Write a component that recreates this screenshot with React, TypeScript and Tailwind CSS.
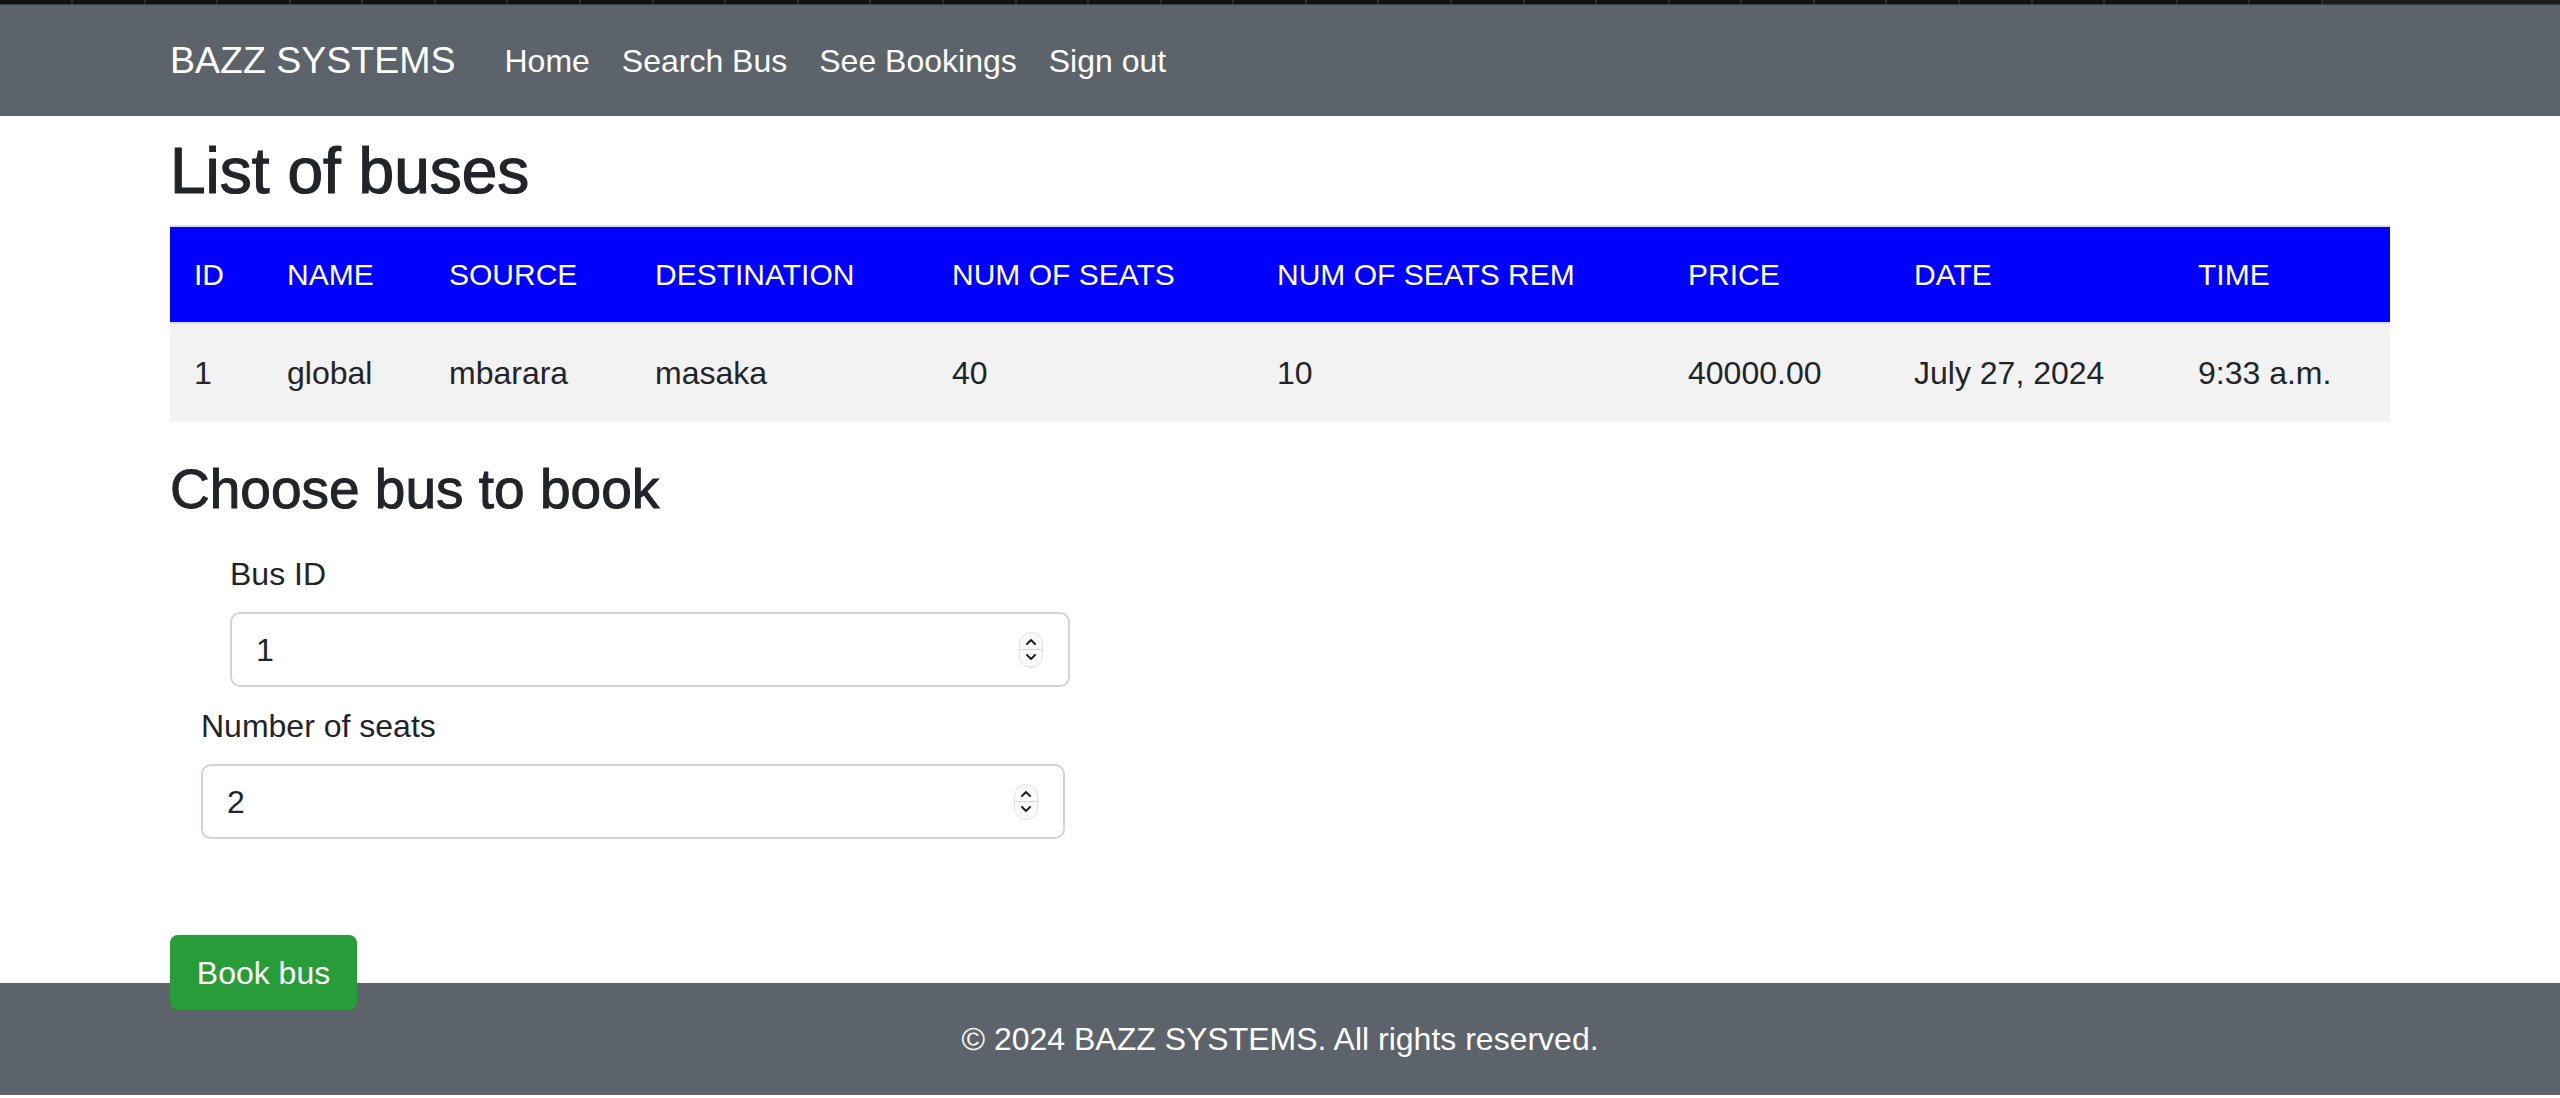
import React from 'react';

const cols = [
  { key: 'id', label: 'ID', w: 'w-[93px]' },
  { key: 'name', label: 'NAME', w: 'w-[162px]' },
  { key: 'source', label: 'SOURCE', w: 'w-[206px]' },
  { key: 'dest', label: 'DESTINATION', w: 'w-[297px]' },
  { key: 'seats', label: 'NUM OF SEATS', w: 'w-[325px]' },
  { key: 'rem', label: 'NUM OF SEATS REM', w: 'w-[411px]' },
  { key: 'price', label: 'PRICE', w: 'w-[226px]' },
  { key: 'date', label: 'DATE', w: 'w-[284px]' },
  { key: 'time', label: 'TIME', w: 'w-[216px]' },
];

const buses = [
  {
    id: '1',
    name: 'global',
    source: 'mbarara',
    dest: 'masaka',
    seats: '40',
    rem: '10',
    price: '40000.00',
    date: 'July 27, 2024',
    time: '9:33 a.m.',
  },
];

const Spinner = () => (
  <div className="flex h-[36px] w-[24px] flex-col items-center justify-center rounded-full border border-[#e3e3e3] bg-[#fbfbfb]">
    <svg width="12" height="10" viewBox="0 0 12 10" className="mb-[2px]">
      <path d="M2 7 L6 3 L10 7" fill="none" stroke="#222" strokeWidth="2" strokeLinecap="round" strokeLinejoin="round" />
    </svg>
    <div className="h-px w-full bg-[#d8d8d8]" />
    <svg width="12" height="10" viewBox="0 0 12 10" className="mt-[2px]">
      <path d="M2 3 L6 7 L10 3" fill="none" stroke="#222" strokeWidth="2" strokeLinecap="round" strokeLinejoin="round" />
    </svg>
  </div>
);

const NumberField = ({ value, width }: { value: string; width: string }) => (
  <div className={`flex h-[75px] ${width} items-center justify-between rounded-[10px] border-2 border-[#ced4da] bg-white pl-[24px] pr-[25px] text-[32px] text-[#212529]`}>
    <span>{value}</span>
    <Spinner />
  </div>
);

export default function App() {
  return (
    <div className="bg-white font-['Liberation_Sans',Arial,sans-serif] text-[#212529]">
      {/* top strip */}
      <div className="flex h-[4px] bg-[#1c1c1c]">
        <div className="h-full w-[71px] bg-[#111]" />
        {Array.from({ length: 31 }).map((_, i) => (
          <div key={i} className="h-full w-[72.58px] border-l-2 border-[#2c2c2c] bg-[#111]" />
        ))}
        <div className="h-full w-[2px] bg-[#2c2c2c]" />
      </div>
      <div className="h-px bg-[#3a3f45]" />

      <nav className="flex h-[111px] items-center bg-[#5c636a] text-white">
        <div className="mx-auto flex w-[2220px] items-center">
          <span className="mr-[33px] text-[37.5px]">BAZZ SYSTEMS</span>
          <a className="px-[16px] text-[32px]">Home</a>
          <a className="px-[16px] text-[32px]">Search Bus</a>
          <a className="px-[16px] text-[32px]">See Bookings</a>
          <a className="px-[16px] text-[32px]">Sign out</a>
        </div>
      </nav>

      <main className="mx-auto w-[2220px]">
        <h1 className="mt-[17px] text-[64px] font-medium leading-[77px] [-webkit-text-stroke:1.2px_#212529]">
          List of buses
        </h1>

        <table className="mt-[15px] w-full table-fixed border-collapse text-left">
          <thead>
            <tr className="h-[97px] border-y-2 border-[#dee2e6] bg-[#0000ff] text-white">
              {cols.map((c) => (
                <th key={c.key} className={`${c.w} px-[24px] text-[30px] font-normal`}>
                  {c.label}
                </th>
              ))}
            </tr>
          </thead>
          <tbody>
            {buses.map((b) => (
              <tr key={b.id} className="h-[98px] bg-[#f2f2f2]">
                {cols.map((c) => (
                  <td key={c.key} className="px-[24px] text-[32px]">
                    {b[c.key as keyof typeof b]}
                  </td>
                ))}
              </tr>
            ))}
          </tbody>
        </table>

        <h2 className="mt-[36px] text-[55px] font-medium leading-[64px] [-webkit-text-stroke:1px_#212529]">
          Choose bus to book
        </h2>

        <form className="flex flex-col">
          <div className="ml-[60px] mt-[29px] flex flex-col">
            <label className="text-[32px] leading-[48px]">Bus ID</label>
            <div className="mt-[14px]">
              <NumberField value="1" width="w-[840px]" />
            </div>
          </div>
          <div className="ml-[31px] mt-[15px] flex flex-col">
            <label className="text-[32px] leading-[48px]">Number of seats</label>
            <div className="mt-[14px]">
              <NumberField value="2" width="w-[864px]" />
            </div>
          </div>
          <div className="relative z-10 mt-[96px]">
            <button
              type="button"
              className="h-[75px] w-[187px] rounded-[8px] bg-[#289c38] text-[32px] text-white"
            >
              Book bus
            </button>
          </div>
        </form>
      </main>

      <footer className="mt-[-27px] flex h-[112px] items-center justify-center bg-[#5c636a] text-[32px] text-white">
        © 2024 BAZZ SYSTEMS. All rights reserved.
      </footer>
    </div>
  );
}
